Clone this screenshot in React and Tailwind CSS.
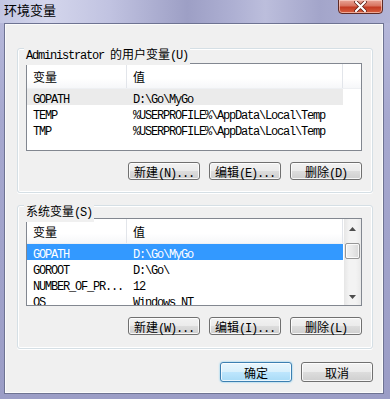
import React from "react";

const LAT = "font-['Liberation_Mono',monospace] text-[12px] tracking-[-1.2px]";
const CJK = "font-['Noto_Sans_CJK_SC',sans-serif] text-[12px] tracking-normal";

function Txt({ zh, lat, pre }) {
  return (
    <span className="whitespace-pre leading-none">
      {pre ? <span className={LAT}>{pre}</span> : null}
      {zh ? <span className={CJK}>{zh}</span> : null}
      {lat ? <span className={LAT}>{lat}</span> : null}
    </span>
  );
}

function Btn({ zh, lat, def, tall }) {
  const base = def
    ? "border-[#3c7fb1] bg-[linear-gradient(#e8f6fd,#d8f0fc_50%,#bee6fd_50%,#a9dbf6)] shadow-[inset_0_0_0_1px_rgba(255,255,255,0.75),0_0_2px_#5ec2f0]"
    : "border-[#707070] bg-[linear-gradient(#f2f2f2,#ebebeb_50%,#dddddd_50%,#cfcfcf)] shadow-[inset_0_0_0_1px_rgba(255,255,255,0.8)]";
  return (
    <div
      className={`w-[72px] ${tall ? "h-[20px]" : "h-[18px]"} rounded-[3px] border ${base} flex items-center justify-center text-black`}
    >
      <Txt zh={zh} lat={lat} />
    </div>
  );
}

function Header({ filler }) {
  return (
    <div className="h-[25px] flex shrink-0 bg-[linear-gradient(#ffffff,#ffffff_60%,#f6f7f9)] border-b border-[#eef0f3]">
      <div className="w-[100px] h-full border-r border-[#e2e5ea] flex items-center pl-[6px]">
        <Txt zh="变量" />
      </div>
      <div className="w-[216px] h-full border-r border-[#e2e5ea] flex items-center pl-[6px]">
        <Txt zh="值" />
      </div>
      {filler ? <div className="flex-1 h-full" /> : null}
    </div>
  );
}

function Row({ name, value, sel }) {
  const cls =
    sel === "blue"
      ? "bg-[#3399ff] text-white"
      : sel === "gray"
      ? "bg-[#ebebeb] text-black"
      : "text-black";
  return (
    <div className="flex h-[16px] shrink-0">
      <div className={`w-[316px] flex items-center ${cls}`}>
        <div className="w-[100px] pl-[6px] overflow-hidden">
          <Txt lat={name} />
        </div>
        <div className="pl-[6px]">
          <Txt lat={value} />
        </div>
      </div>
    </div>
  );
}

function Tri({ up }) {
  return (
    <svg width="7" height="4" viewBox="0 0 7 4">
      {up ? (
        <polygon points="0,4 7,4 3.5,0" fill="#4d4d4d" />
      ) : (
        <polygon points="0,0 7,0 3.5,4" fill="#4d4d4d" />
      )}
    </svg>
  );
}

function ScrollBar() {
  return (
    <div className="w-[17px] h-full flex flex-col bg-[linear-gradient(90deg,#e6e6e6,#f3f3f3_30%,#f3f3f3_70%,#e9e9e9)]">
      <div className="h-[17px] flex items-center justify-center pt-[2px]">
        <Tri up />
      </div>
      <div className="h-[7px]" />
      <div className="h-[16px] mx-[1px] rounded-[2px] border border-[#979797] bg-[linear-gradient(90deg,#f3f3f3,#e8e8e8_50%,#d9d9d9)] shadow-[inset_0_0_0_1px_rgba(255,255,255,0.8)]" />
      <div className="flex-1" />
      <div className="h-[17px] flex items-center justify-center">
        <Tri />
      </div>
    </div>
  );
}

function ListBox({ rows, scroll }) {
  return (
    <div className="w-[336px] h-[88px] border border-[#828790] bg-white flex overflow-hidden">
      <div className="flex-1 flex flex-col overflow-hidden">
        <Header filler={!scroll} />
        {rows.map((r, i) => (
          <Row key={i} {...r} />
        ))}
      </div>
      {scroll ? <ScrollBar /> : null}
    </div>
  );
}

function Group({ label, children, className }) {
  return (
    <div
      className={`relative ml-[12px] w-[356px] rounded-[3px] border border-[#d5dfe5] shadow-[inset_0_0_0_1px_#ffffff,0_1px_0_#ffffff] ${className}`}
    >
      <div className="absolute -top-[8px] left-[6px] px-[2px] bg-[#f0f0f0] text-black">
        {label}
      </div>
      {children}
    </div>
  );
}

export default function App() {
  return (
    <div className="w-[390px] h-[399px] overflow-hidden flex flex-col bg-[linear-gradient(180deg,#b9bbdc,#a6a8cf_30%,#9b9dc6)]">
      <div className="h-[23px] shrink-0 flex justify-between bg-[linear-gradient(90deg,#c3c6e3,#d4d6ec_12%,#c1c3e1_28%,#9d9fc5_48%,#aeb0d3_60%,#bcbedc_68%,#a3a5ca_82%,#b2b4d6)]">
        <div className="pl-[4px] pt-[3px] text-[13px] leading-none text-black font-['Noto_Sans_CJK_SC',sans-serif]">
          环境变量
        </div>
        <div className="mr-[7px] w-[45px] h-[15px] -mt-[1px] rounded-b-[4px] border border-[#5e2a26] bg-[linear-gradient(#e9a597,#d8735f_45%,#c33a22_55%,#d8603f)] shadow-[inset_0_0_0_1px_rgba(255,220,210,0.6)] flex items-center justify-center">
          <svg width="13" height="11" viewBox="0 0 13 11">
            <path
              d="M2 1 L11 10 M11 1 L2 10"
              stroke="#5a1a10"
              strokeWidth="3.6"
              strokeLinecap="round"
            />
            <path
              d="M2 1 L11 10 M11 1 L2 10"
              stroke="#ffffff"
              strokeWidth="2.2"
              strokeLinecap="round"
            />
          </svg>
        </div>
      </div>
      <div className="ml-[4px] mr-[6px] mb-[5px] h-[371px] border border-[#6e7392] bg-[#f0f0f0] shadow-[inset_0_0_0_1px_#fbfbfb] flex flex-col pt-[24px]">
        <Group label={<Txt pre="Administrator " zh="的用户变量" lat="(U)" />}>
          <div className="pl-[8px] pt-[14px]">
            <ListBox
              rows={[
                { name: "GOPATH", value: "D:\\Go\\MyGo", sel: "gray" },
                { name: "TEMP", value: "%USERPROFILE%\\AppData\\Local\\Temp" },
                { name: "TMP", value: "%USERPROFILE%\\AppData\\Local\\Temp" },
              ]}
            />
            <div className="mt-[11px] mb-[12px] w-[336px] flex justify-end gap-[9px]">
              <Btn zh="新建" lat="(N)..." />
              <Btn zh="编辑" lat="(E)..." />
              <Btn zh="删除" lat="(D)" />
            </div>
          </div>
        </Group>
        <Group label={<Txt zh="系统变量" lat="(S)" />} className="mt-[12px]">
          <div className="pl-[8px] pt-[12px]">
            <ListBox
              scroll
              rows={[
                { name: "GOPATH", value: "D:\\Go\\MyGo", sel: "blue" },
                { name: "GOROOT", value: "D:\\Go\\" },
                { name: "NUMBER_OF_PR...", value: "12" },
                { name: "OS", value: "Windows_NT" },
              ]}
            />
            <div className="mt-[11px] mb-[13px] w-[336px] flex justify-end gap-[9px]">
              <Btn zh="新建" lat="(W)..." />
              <Btn zh="编辑" lat="(I)..." />
              <Btn zh="删除" lat="(L)" />
            </div>
          </div>
        </Group>
        <div className="mt-[13px] ml-[12px] w-[356px] flex justify-end gap-[9px]">
          <Btn zh="确定" def tall />
          <Btn zh="取消" tall />
        </div>
      </div>
    </div>
  );
}
